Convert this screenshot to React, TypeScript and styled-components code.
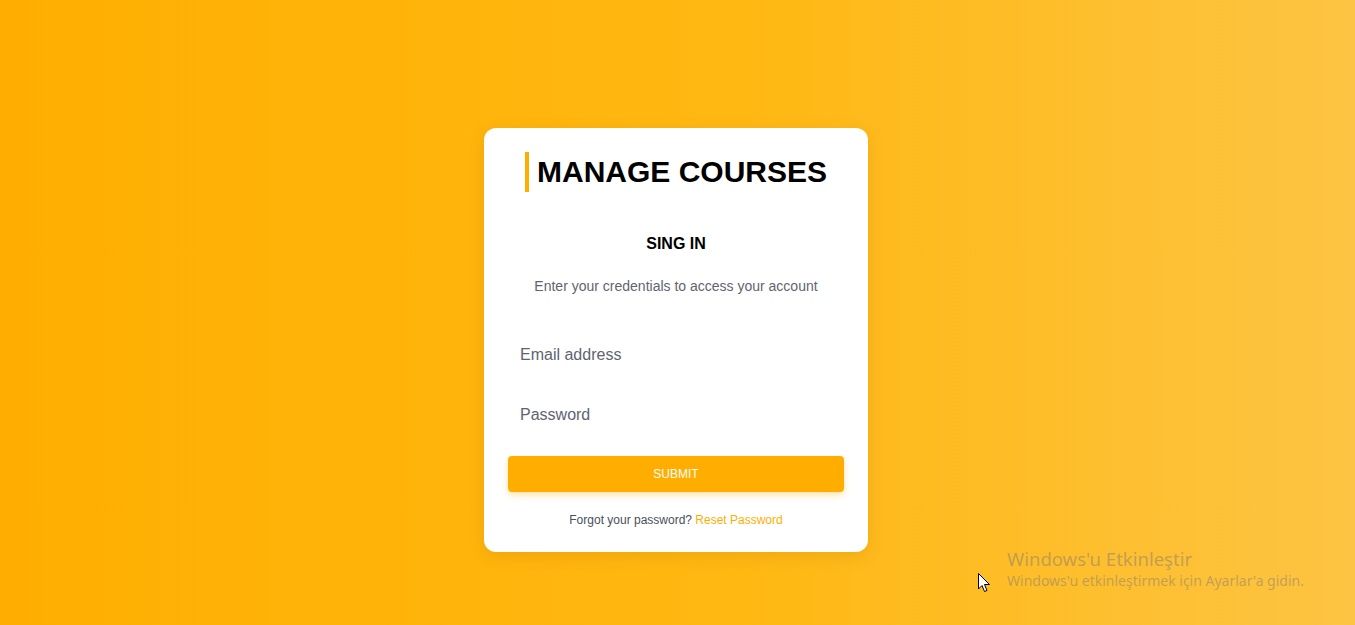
import React from "react";
import styled, { createGlobalStyle } from "styled-components";

const Global = createGlobalStyle`
  html, body { margin: 0; padding: 0; height: 100%; }
  body { font-family: "Liberation Sans", Arial, sans-serif; }
  #root { height: 100%; }
  * { box-sizing: border-box; }
`;

const Page = styled.div`
  position: relative;
  width: 100%;
  height: 625px;
  background: linear-gradient(90deg, #ffae00 0%, #ffb812 55%, #fdc443 100%);
  display: flex;
  align-items: flex-start;
  justify-content: center;
  padding-top: 128px;
  padding-right: 3px;
  overflow: hidden;
`;

const Card = styled.div`
  width: 384px;
  height: 424px;
  background: #fff;
  border-radius: 12px;
  box-shadow: 0 4px 16px rgba(160, 100, 0, 0.18);
  padding: 24px 24px 0;
  display: flex;
  flex-direction: column;
  align-items: center;
`;

const Title = styled.h1`
  margin: 0;
  font-size: 30px;
  font-weight: 700;
  color: #000;
  border-left: 4px solid #ffae00;
  padding-left: 8px;
  line-height: 40px;
  height: 40px;
`;

const Heading = styled.h2`
  margin: 43px 0 0;
  font-size: 16px;
  font-weight: 700;
  line-height: 18px;
  color: #000;
`;

const Subtitle = styled.p`
  margin: 24px 0 0;
  font-size: 14px;
  line-height: 18px;
  color: #5f6470;
`;

const Form = styled.form`
  width: 100%;
  margin-top: 48px;
  display: flex;
  flex-direction: column;
`;

const Input = styled.input`
  width: 100%;
  height: 24px;
  border: none;
  outline: none;
  padding: 0 12px;
  font-family: "Liberation Sans", Arial, sans-serif;
  font-size: 16px;
  color: #222;
  background: transparent;
  & + & { margin-top: 36px; }
  &::placeholder { color: #5f6470; opacity: 1; }
`;

const Button = styled.button`
  margin-top: 29px;
  width: 100%;
  height: 36px;
  border: none;
  border-radius: 4px;
  background: #ffae00;
  color: #fff;
  font-family: "Liberation Sans", Arial, sans-serif;
  font-size: 12px;
  font-weight: 400;
  text-transform: uppercase;
  box-shadow: 0 3px 6px rgba(255, 174, 0, 0.35);
  cursor: pointer;
`;

const Footer = styled.p`
  margin: 21px 0 0;
  text-align: center;
  font-size: 12px;
  line-height: 14px;
  color: #4a4f5a;
`;

const Link = styled.a`
  color: #ffae00;
  text-decoration: none;
`;

const Watermark = styled.div`
  position: absolute;
  left: 1007px;
  top: 546px;
  color: rgba(140, 130, 110, 0.55);
  font-family: "Noto Sans", "Open Sans", sans-serif;
`;

const WmTitle = styled.div`
  font-size: 18.5px;
  line-height: 25px;
`;

const WmText = styled.div`
  font-size: 14px;
  line-height: 20px;
`;

const Cursor = styled.svg`
  position: absolute;
  left: 978px;
  top: 573px;
`;

export default function App() {
  return (
    <>
      <Global />
      <Page>
        <Card>
          <Title>MANAGE COURSES</Title>
          <Heading>SING IN</Heading>
          <Subtitle>Enter your credentials to access your account</Subtitle>
          <Form onSubmit={(e) => e.preventDefault()}>
            <Input type="email" placeholder="Email address" />
            <Input type="password" placeholder="Password" />
            <Button type="submit">Submit</Button>
          </Form>
          <Footer>
            Forgot your password? <Link href="#">Reset Password</Link>
          </Footer>
        </Card>
        <Watermark>
          <WmTitle>Windows'u Etkinleştir</WmTitle>
          <WmText>Windows'u etkinleştirmek için Ayarlar'a gidin.</WmText>
        </Watermark>
        <Cursor width="13" height="20" viewBox="0 0 13 20">
          <path d="M0.5 0.5 L0.5 16 L4 12.5 L6.5 18.5 L9 17.5 L6.5 11.5 L11.5 11.5 Z" fill="#fff" stroke="#000" strokeWidth="1" />
        </Cursor>
      </Page>
    </>
  );
}
